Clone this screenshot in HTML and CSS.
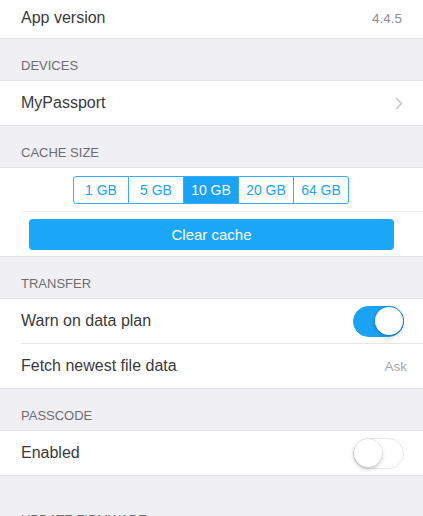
FILE: index.html
```html
<!DOCTYPE html>
<html>
<head>
    <title>Settings</title>
    <link rel="stylesheet" href="styles.css">
</head>
<body>
    <div class="group first">
        <div class="row">
            <span class="label">App version</span>
            <span class="value">4.4.5</span>
        </div>
    </div>

    <div class="section-title">DEVICES</div>
    <div class="group">
        <div class="row">
            <span class="label">MyPassport</span>
            <svg class="chevron" width="8" height="13" viewBox="0 0 8 13">
                <path d="M1 1 L6.5 6.5 L1 12" fill="none" stroke="#c7c7cc" stroke-width="1.6"/>
            </svg>
        </div>
    </div>

    <div class="section-title">CACHE SIZE</div>
    <div class="group cache">
        <div class="segments">
            <span class="segment">1 GB</span>
            <span class="segment">5 GB</span>
            <span class="segment active">10 GB</span>
            <span class="segment">20 GB</span>
            <span class="segment">64 GB</span>
        </div>
        <div class="inset-line"></div>
        <button class="clear-btn">Clear cache</button>
    </div>

    <div class="section-title">TRANSFER</div>
    <div class="group">
        <div class="row">
            <span class="label">Warn on data plan</span>
            <span class="toggle on"><span class="knob"></span></span>
        </div>
        <div class="row">
            <span class="label">Fetch newest file data</span>
            <span class="value light">Ask</span>
        </div>
    </div>

    <div class="section-title">PASSCODE</div>
    <div class="group">
        <div class="row">
            <span class="label">Enabled</span>
            <span class="toggle"><span class="knob"></span></span>
        </div>
    </div>

    <div class="section-title big-gap">UPDATE FIRMWARE</div>
</body>
</html>
```

FILE: styles.css
```css
body {
    margin: 0;
    padding: 0;
    background-color: #efeff4;
    font-family: "Liberation Sans", Arial, sans-serif;
    color: #3a3a3c;
    overflow: hidden;
    height: 516px;
}

.group {
    background-color: #fff;
    border-top: 1px solid #e3e3e8;
    border-bottom: 1px solid #e3e3e8;
}

.group.first {
    border-top: none;
}

.row {
    height: 44px;
    display: flex;
    align-items: center;
    justify-content: space-between;
    padding: 0 16px 0 21px;
    position: relative;
}

.first .row {
    height: 36px;
    padding-bottom: 2px;
}

.row + .row {
    border-top: 1px solid #e6e6ea;
    margin-left: 21px;
    padding-left: 0;
}

.label {
    font-size: 16px;
}

.value {
    font-size: 13.5px;
    color: #8e8e93;
    margin-right: 5px;
}

.value.light {
    color: #a8a8ad;
    margin-right: 0;
}

.chevron {
    margin-right: 4px;
}

.section-title {
    font-size: 13px;
    line-height: 16px;
    color: #6d6d72;
    padding: 19px 21px 6px;
}

.section-title.big-gap {
    padding-top: 36px;
}

/* cache size block */
.cache {
    padding: 8px 0 6px;
}

.segments {
    display: flex;
    justify-content: center;
    margin-left: -1px;
}

.segment {
    width: 54px;
    height: 26px;
    line-height: 26px;
    text-align: center;
    font-size: 14px;
    color: #1aa3f5;
    border: 1px solid #3aaef5;
    border-left: none;
}

.segment:first-child {
    border-left: 1px solid #3aaef5;
    border-radius: 3px 0 0 3px;
}

.segment:last-child {
    border-radius: 0 3px 3px 0;
}

.segment.active {
    background-color: #1aa3f5;
    color: #fff;
}

.inset-line {
    height: 1px;
    background-color: #ececf0;
    margin: 7px 0 7px 22px;
}

.clear-btn {
    display: block;
    width: 365px;
    height: 31px;
    margin: 0 auto 0 29px;
    border: none;
    border-radius: 4px;
    background-color: #1aa7f8;
    color: #fff;
    font-family: "Liberation Sans", Arial, sans-serif;
    font-size: 15px;
}

/* switches */
.toggle {
    width: 51px;
    height: 31px;
    border-radius: 16px;
    box-sizing: border-box;
    border: 1.5px solid #e5e5ea;
    background-color: #fff;
    position: relative;
    margin-right: 3px;
}

.toggle .knob {
    position: absolute;
    top: 0;
    left: 0;
    width: 28px;
    height: 28px;
    border-radius: 50%;
    background-color: #fff;
    box-shadow: 0 2px 4px rgba(0, 0, 0, 0.22), 0 0 0 0.5px rgba(0, 0, 0, 0.08);
}

.toggle.on {
    background-color: #1aa3f5;
    border-color: #1aa3f5;
}

.toggle.on .knob {
    left: auto;
    right: 0;
    box-shadow: 0 2px 4px rgba(0, 0, 0, 0.2), 0 0 0 1px #1890d8;
}
```
